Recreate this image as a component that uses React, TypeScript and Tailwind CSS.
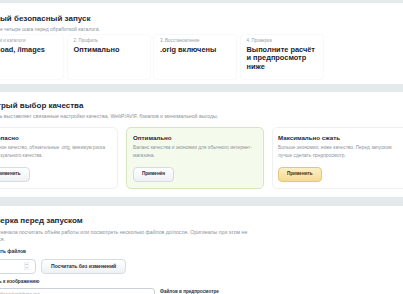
const font = { fontFamily: '"Liberation Sans", Arial, sans-serif' };

const steps = [
  { label: "1. Пути и каталоги", value: "/upload, /images" },
  { label: "2. Профиль", value: "Оптимально" },
  { label: "3. Восстановление", value: ".orig включены" },
  { label: "4. Проверка", value: "Выполните расчёт и предпросмотр ниже" },
];

function Btn({ children, yellow = false, big = false }: { children: React.ReactNode; yellow?: boolean; big?: boolean }) {
  const size = big ? "px-[9px] text-[5.1px]" : "px-[8px] text-[4.6px]";
  return (
    <button
      type="button"
      className={
        yellow
          ? `h-[15px] rounded-[4px] border border-[#e3c679] bg-gradient-to-b from-[#fdf0c6] to-[#f5da92] font-bold leading-none text-[#3b3114] ${size}`
          : `h-[15px] rounded-[4px] border border-[#d6dce2] bg-gradient-to-b from-white to-[#eef1f4] font-bold leading-none text-[#1f2a37] ${size}`
      }
    >
      {children}
    </button>
  );
}

export default function App() {
  return (
    <div className="h-[294px] w-[403px] overflow-hidden bg-[#e4e9ec] text-[5px] leading-[6px]" style={font}>
      <div className="-ml-[30px] flex w-[470px] flex-col pt-[3px]">
        {/* Step summary */}
        <section className="h-[81px] w-[450px] rounded-[5px] bg-white px-[10px] pt-[11px]">
          <h2 className="text-[8px] font-bold leading-[10px] text-[#1e2631]">Первый безопасный запуск</h2>
          <p className="mt-[1.5px] text-[5px] leading-[7px] text-[#8c939b]">
            Пройдите четыре шага перед обработкой каталога.
          </p>
          <div className="mt-[1.5px] flex gap-[2.5px]">
            {steps.map((s) => (
              <div key={s.label} className="h-[46px] w-[84px] rounded-[3px] border border-[#f8f9fa] px-[6px] pt-[3px]">
                <div className="text-[4.5px] leading-[6px] text-[#9aa0a7]">{s.label}</div>
                <div className="mt-[1.75px] text-[7.4px] font-bold leading-[8.5px] text-[#1f2328]">{s.value}</div>
              </div>
            ))}
          </div>
        </section>

        {/* Quality presets */}
        <section className="mt-[8px] h-[105px] w-[450px] rounded-[5px] bg-white px-[10px] pt-[8.7px]">
          <h2 className="text-[8px] font-bold leading-[10px] text-[#1e2631]">Быстрый выбор качества</h2>
          <p className="mt-[2.5px] text-[5.2px] leading-[7px] text-[#8c939b]">
            Профиль выставляет связанные настройки качества, WebP/AVIF, бэкапов и минимальной выгоды.
          </p>
          <div className="mt-[6.8px] grid grid-cols-3 gap-[8px]">
            <div className="h-[62px] rounded-[5px] border border-[#eef0f2] bg-white px-[5px] pt-[6.3px]">
              <div className="text-[6.2px] font-bold leading-[8px] text-[#1e2631]">Безопасно</div>
              <p className="mt-[2.1px] text-[4.6px] leading-[7.7px] text-[#8c939b]">
                Исходное качество, обязательные .orig, минимум риска для визуального качества.
              </p>
              <div className="mt-[7px] flex">
                <Btn>Применить</Btn>
              </div>
            </div>
            <div className="h-[62px] rounded-[5px] border border-[#d3e7bb] bg-[#f4fbec] px-[6px] pt-[6.3px]">
              <div className="text-[6.2px] font-bold leading-[8px] text-[#1e2631]">Оптимально</div>
              <p className="mt-[2.1px] text-[4.8px] leading-[7.7px] text-[#8c939b]">
                Баланс качества и экономии для обычного интернет-магазина.
              </p>
              <div className="mt-[7px] flex">
                <Btn>Применён</Btn>
              </div>
            </div>
            <div className="h-[62px] rounded-[5px] border border-[#eef0f2] bg-white px-[5px] pt-[6.3px]">
              <div className="text-[6.2px] font-bold leading-[8px] text-[#1e2631]">Максимально сжать</div>
              <p className="mt-[2.1px] text-[4.8px] leading-[7.7px] text-[#8c939b]">
                Больше экономии, ниже качество. Перед запуском лучше сделать предпросмотр.
              </p>
              <div className="mt-[7px] flex">
                <Btn yellow>Применить</Btn>
              </div>
            </div>
          </div>
        </section>

        {/* Dry run */}
        <section className="mt-[9px] h-[120px] w-[450px] rounded-[5px] bg-white px-[10px] pt-[9.7px]">
          <h2 className="text-[8px] font-bold leading-[10px] text-[#1e2631]">Проверка перед запуском</h2>
          <p className="mt-[3.2px] w-[274px] text-[5.2px] leading-[6.7px] text-[#8c939b]">
            Можно сначала посчитать объём работы или посмотреть несколько файлов до/после. Оригиналы при этом не
            меняются.
          </p>
          <div className="mt-[7px] text-[4.8px] font-bold leading-[6px] text-[#2a323c]">Проверить файлов</div>
          <div className="mt-[3.7px] flex gap-[5px]">
            <div className="flex h-[15px] w-[56px] items-center justify-end rounded-[4px] border border-[#d2d8de] bg-white pr-[6px]">
              <svg width="5" height="8" viewBox="0 0 5 8" fill="none" stroke="#9aa1a8" strokeWidth="0.7">
                <rect x="0.3" y="0.3" width="4.4" height="7.4" rx="0.8" stroke="#e1e5e9" />
                <path d="M1.4 3 L2.5 1.9 L3.6 3" />
                <path d="M1.4 5 L2.5 6.1 L3.6 5" />
              </svg>
            </div>
            <Btn big>Посчитать без изменений</Btn>
          </div>
          <div className="flex gap-[5px]">
            <div>
              <div className="mt-[4.7px] text-[4.8px] font-bold leading-[6px] text-[#2a323c]">Или путь к изображению</div>
              <div className="mt-[3.3px] flex h-[14px] w-[175px] items-center rounded-[3px] border border-[#c9d0d7] bg-white px-[5px] text-[4.8px] text-[#a1a7ae]">
                /upload/catalog/photo.jpg
              </div>
            </div>
            <div className="mt-[15px] text-[4.6px] font-bold leading-[6px] text-[#2a323c]">Файлов в предпросмотре</div>
          </div>
        </section>
      </div>
    </div>
  );
}
